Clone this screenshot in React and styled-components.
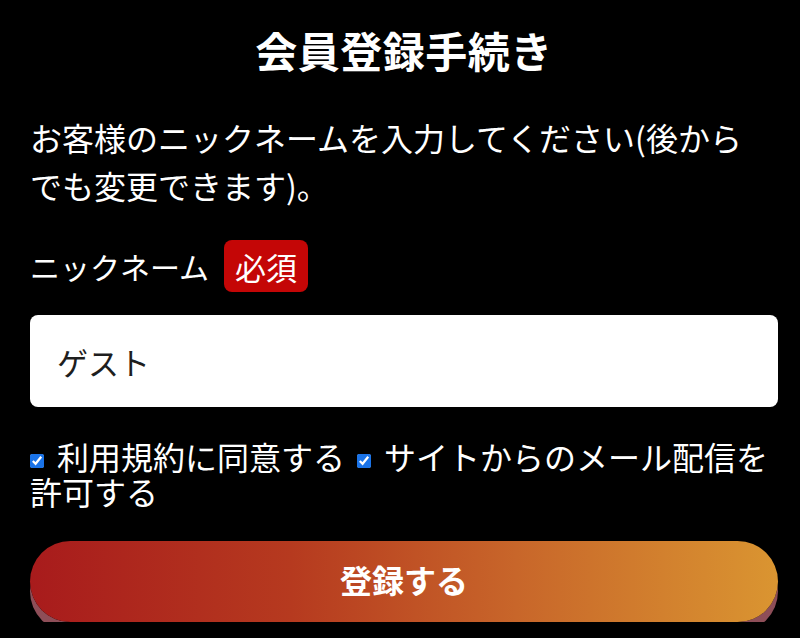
import styled, { createGlobalStyle } from "styled-components";

const GlobalStyle = createGlobalStyle`
  html, body {
    margin: 0;
    padding: 0;
    background: #000;
    overflow: hidden;
  }
  body {
    font-family: "Noto Sans CJK JP", "Noto Sans", sans-serif;
    color: #fff;
  }
`;

const Page = styled.main`
  display: flex;
  flex-direction: column;
  padding: 20px 22px 0 30px;
  width: 800px;
  box-sizing: border-box;
`;

const Title = styled.h1`
  margin: 0;
  font-size: 42px;
  line-height: 59px;
  font-weight: 700;
  text-align: center;
  letter-spacing: 0.5px;
`;

const Lead = styled.p`
  margin: 34px 0 0;
  padding-right: 22px;
  font-size: 32px;
  line-height: 48px;
`;

const LabelRow = styled.div`
  display: flex;
  align-items: center;
  gap: 15px;
  margin-top: 31px;
  height: 52px;
`;

const Label = styled.label`
  font-size: 30px;
  line-height: 1;
`;

const Badge = styled.span`
  display: inline-flex;
  align-items: center;
  justify-content: center;
  height: 52px;
  padding: 0 11px;
  background: #c40606;
  border-radius: 8px;
  font-size: 31px;
  box-sizing: border-box;
`;

const Input = styled.input`
  margin-top: 23px;
  height: 92px;
  box-sizing: border-box;
  border: none;
  border-radius: 8px;
  background: #fff;
  padding: 0 27px;
  font-family: inherit;
  font-size: 31px;
  color: #1e1e1e;
  outline: none;
`;

const Agreements = styled.div`
  margin-top: 32px;
  font-size: 32px;
  line-height: 35px;
`;

const Check = styled.input`
  width: 14px;
  height: 14px;
  margin: 0 13px 0 ${(p) => (p.$first ? "0" : "12px")};
  vertical-align: middle;
  accent-color: #1a73e8;
`;

const Submit = styled.button`
  margin-top: 32px;
  height: 81px;
  border: none;
  border-radius: 41px;
  background: linear-gradient(90deg, #a81b1c 0%, #b63a1f 35%, #c8662a 65%, #da9531 100%);
  box-shadow: 0 10px 0 #8e4e58;
  color: #fff;
  font-family: inherit;
  font-size: 32px;
  font-weight: 700;
  line-height: 1;
  padding: 0 0 6px;
  cursor: pointer;
`;

export default function App() {
  return (
    <>
      <GlobalStyle />
      <Page>
        <Title>会員登録手続き</Title>
        <Lead>
          お客様のニックネームを入力してください(後からでも変更できます)。
        </Lead>
        <LabelRow>
          <Label htmlFor="nickname">ニックネーム</Label>
          <Badge>必須</Badge>
        </LabelRow>
        <Input id="nickname" type="text" defaultValue="ゲスト" />
        <Agreements>
          <label>
            <Check type="checkbox" defaultChecked $first />
            利用規約に同意する
          </label>
          <label>
            <Check type="checkbox" defaultChecked />
            サイトからのメール配信を許可する
          </label>
        </Agreements>
        <Submit type="button">登録する</Submit>
      </Page>
    </>
  );
}
